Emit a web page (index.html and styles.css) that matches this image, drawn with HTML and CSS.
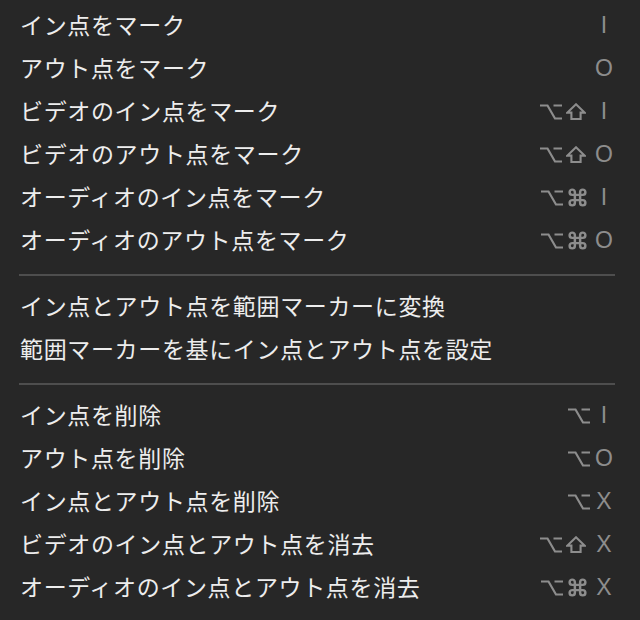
FILE: index.html
```html
<!DOCTYPE html>
<html lang="ja">
<head>
<meta charset="utf-8">
<link rel="stylesheet" href="styles.css">
</head>
<body>
<svg width="0" height="0" class="defs">
  <defs>
    <symbol id="opt" viewBox="0 0 22 16"><path d="M0 1.5H7.5L15 14.5H22M13.5 1.5H22" fill="none" stroke="currentColor" stroke-width="2.2"/></symbol>
    <symbol id="shift" viewBox="0 0 20 17"><path d="M10 1.3L18.6 9.6H14.6V16H5.4V9.6H1.4Z" fill="none" stroke="currentColor" stroke-width="2.1" stroke-linejoin="miter"/></symbol>
    <symbol id="cmd" viewBox="0 0 24 24"><path d="M15 6v12a3 3 0 1 0 3-3H6a3 3 0 1 0 3 3V6a3 3 0 1 0-3 3h12a3 3 0 1 0-3-3" fill="none" stroke="currentColor" stroke-width="2.8"/></symbol>
  </defs>
</svg>
<div class="menu">
  <div class="group">
    <div class="item"><span class="label">イン点をマーク</span><span class="keys"><span class="key">I</span></span></div>
    <div class="item"><span class="label">アウト点をマーク</span><span class="keys"><span class="key">O</span></span></div>
    <div class="item"><span class="label">ビデオのイン点をマーク</span><span class="keys"><svg class="mod opt"><use href="#opt"/></svg><svg class="mod shift"><use href="#shift"/></svg><span class="key">I</span></span></div>
    <div class="item"><span class="label">ビデオのアウト点をマーク</span><span class="keys"><svg class="mod opt"><use href="#opt"/></svg><svg class="mod shift"><use href="#shift"/></svg><span class="key">O</span></span></div>
    <div class="item"><span class="label">オーディオのイン点をマーク</span><span class="keys"><svg class="mod opt"><use href="#opt"/></svg><svg class="mod cmd"><use href="#cmd"/></svg><span class="key">I</span></span></div>
    <div class="item"><span class="label">オーディオのアウト点をマーク</span><span class="keys"><svg class="mod opt"><use href="#opt"/></svg><svg class="mod cmd"><use href="#cmd"/></svg><span class="key">O</span></span></div>
  </div>
  <div class="sep"></div>
  <div class="group">
    <div class="item"><span class="label">イン点とアウト点を範囲マーカーに変換</span></div>
    <div class="item"><span class="label">範囲マーカーを基にイン点とアウト点を設定</span></div>
  </div>
  <div class="sep"></div>
  <div class="group">
    <div class="item"><span class="label">イン点を削除</span><span class="keys"><svg class="mod opt"><use href="#opt"/></svg><span class="key">I</span></span></div>
    <div class="item"><span class="label">アウト点を削除</span><span class="keys"><svg class="mod opt"><use href="#opt"/></svg><span class="key">O</span></span></div>
    <div class="item"><span class="label">イン点とアウト点を削除</span><span class="keys"><svg class="mod opt"><use href="#opt"/></svg><span class="key">X</span></span></div>
    <div class="item"><span class="label">ビデオのイン点とアウト点を消去</span><span class="keys"><svg class="mod opt"><use href="#opt"/></svg><svg class="mod shift"><use href="#shift"/></svg><span class="key">X</span></span></div>
    <div class="item"><span class="label">オーディオのイン点とアウト点を消去</span><span class="keys"><svg class="mod opt"><use href="#opt"/></svg><svg class="mod cmd"><use href="#cmd"/></svg><span class="key">X</span></span></div>
  </div>
</div>
</body>
</html>
```

FILE: styles.css
```css
html, body {
  margin: 0;
  padding: 0;
}
body {
  width: 640px;
  height: 620px;
  overflow: hidden;
  background: #272727;
  font-family: "Noto Sans CJK JP", "Noto Sans", sans-serif;
}
.defs {
  position: absolute;
  width: 0;
  height: 0;
}
.menu {
  padding: 5px 26px 0 20px;
}
.group {
  display: flex;
  flex-direction: column;
}
.item {
  height: 43px;
  display: flex;
  align-items: center;
  justify-content: space-between;
}
.label {
  color: #ededed;
  font-size: 23px;
  font-weight: 400;
  letter-spacing: 0.65px;
  line-height: 1;
  padding-bottom: 4px;
}
.keys {
  display: flex;
  align-items: center;
  color: #8d8d8d;
  padding-bottom: 2px;
}
.mod {
  display: block;
}
.opt {
  width: 22px;
  height: 16px;
  margin-right: 4px;
}
.shift {
  width: 20px;
  height: 17px;
  margin-right: 8px;
}
.cmd {
  width: 21px;
  height: 21px;
  margin-right: 6px;
}
.key {
  width: 20px;
  text-align: center;
  font-family: "Liberation Sans", Arial, sans-serif;
  font-size: 23px;
  line-height: 1;
}
.sep {
  height: 2px;
  margin: 11px -1px 10px -1px;
  background: #4e4e4e;
}
```
